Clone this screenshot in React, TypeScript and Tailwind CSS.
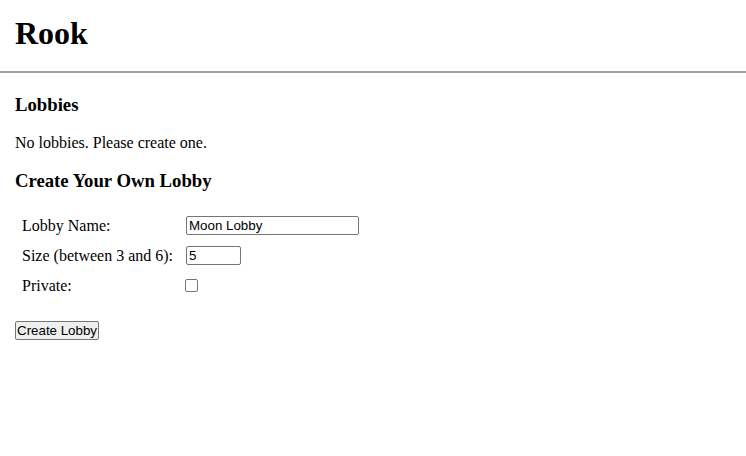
import React from "react";

const App: React.FC = () => {
  return (
    <div className="min-h-[456px] bg-white text-black font-['Liberation_Serif',serif]">
      <header className="border-b-2 border-[#a0a0a0] px-[15px] pt-[15px] pb-[19px]">
        <h1 className="text-[32px] font-bold leading-[37px]">Rook</h1>
      </header>

      <main className="px-[15px]">
        <h3 className="mt-[21px] text-[18.72px] font-bold leading-[22px]">Lobbies</h3>
        <p className="mt-[18px] text-[16px] leading-[18px]">No lobbies. Please create one.</p>

        <h3 className="mt-[18px] text-[18.72px] font-bold leading-[22px]">Create Your Own Lobby</h3>

        <div className="mt-[24px] flex flex-col gap-[11px] pl-[7px] text-[16px] leading-[19px]">
          <div className="flex items-center">
            <span className="w-[164px]">Lobby Name:</span>
            <input
              type="text"
              defaultValue="Moon Lobby"
              className="h-[19px] w-[173px] rounded-[2px] border border-[#767676] px-[2px] font-['Liberation_Sans',sans-serif] text-[13.33px] leading-[15px]"
            />
          </div>
          <div className="flex items-center">
            <span className="w-[164px]">Size (between 3 and 6):</span>
            <input
              type="text"
              defaultValue="5"
              className="h-[19px] w-[55px] rounded-[2px] border border-[#767676] px-[2px] font-['Liberation_Sans',sans-serif] text-[13.33px] leading-[15px]"
            />
          </div>
          <div className="flex items-center">
            <span className="w-[164px]">Private:</span>
            <span className="-ml-px block h-[13px] w-[13px] rounded-[2px] border border-[#767676] bg-white" />
          </div>
        </div>

        <button
          type="button"
          className="mt-[26px] h-[19px] rounded-[2px] border border-[#767676] bg-[#efefef] px-px font-['Liberation_Sans',sans-serif] text-[13.33px] leading-[15px]"
        >
          Create Lobby
        </button>
      </main>
    </div>
  );
};

export default App;
